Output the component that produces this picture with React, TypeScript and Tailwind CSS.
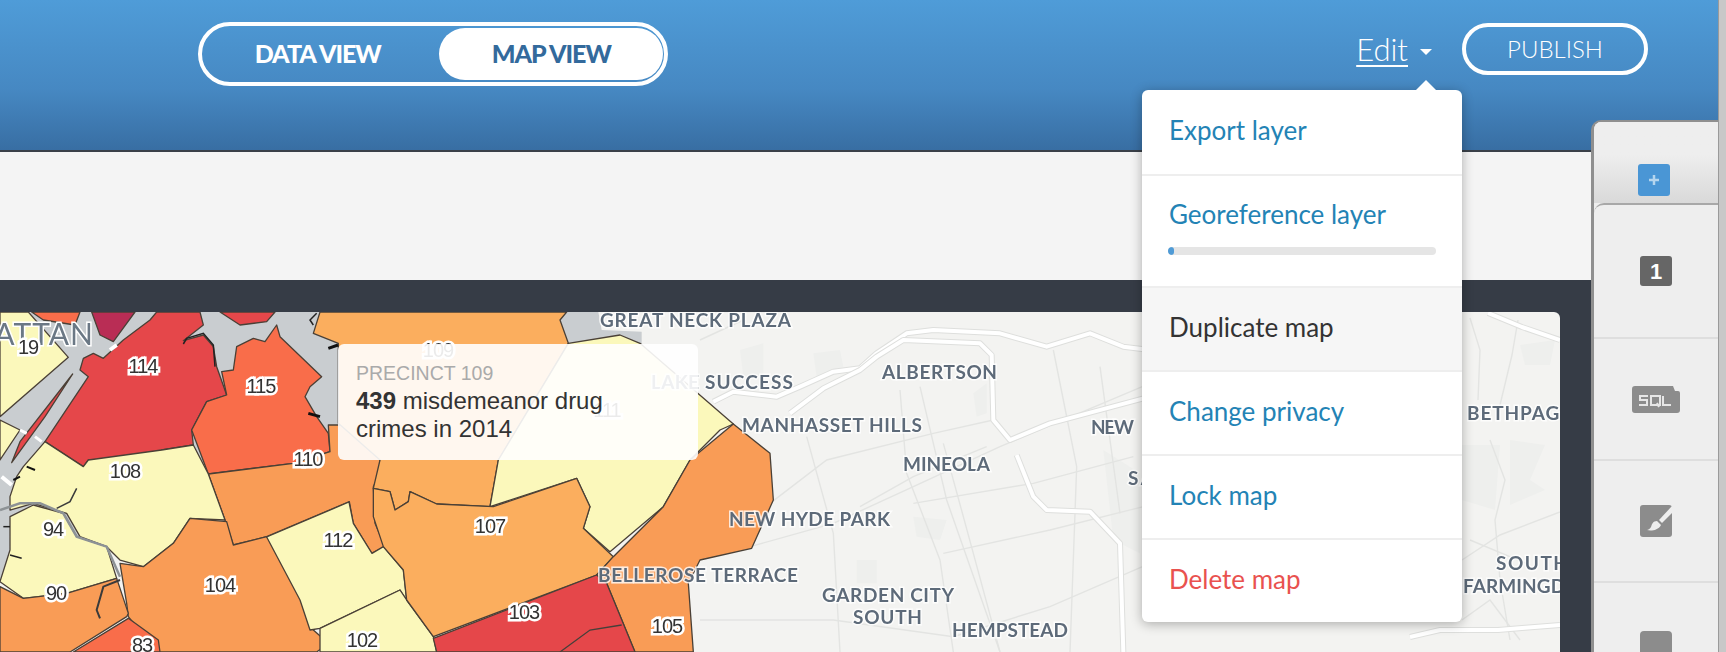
import React from "react"

// trace helpers: the numbers come from crops of the map, 3x around these origins
const trace = (ox: number, oy: number) => (p: number[]) => {
  const out: string[] = []
  for (let i = 0; i < p.length; i += 2) out.push(`${ox + p[i] / 3},${oy + p[i + 1] / 3}`)
  return out.join(" ")
}
const west = trace(0, 270)
const mid = trace(320, 300)
const east = trace(700, 300)

const YELLOW = "#fbf8bb"
const ORANGE = "#f99c56"
const LIGHT_ORANGE = "#fbae5e"
const RED = "#e5474a"
const CORAL = "#f96d4a"
const PLUM = "#b92d55"

const areas: { fill: string; pts: string }[] = [
  { fill: "#c9cdd0", pts: west([0, 126, 1030, 126, 1030, 470, 700, 720, 0, 940]) },
  { fill: "#c9cdd0", pts: mid([700, 36, 835, 36, 845, 90, 965, 95, 965, 140, 700, 140]) },
  { fill: YELLOW, pts: west([0, 126, 85, 126, 205, 262, 0, 440]) },
  { fill: YELLOW, pts: west([0, 450, 60, 480, 0, 570]) },
  { fill: CORAL, pts: west([95, 126, 240, 126, 225, 165, 130, 150]) },
  { fill: PLUM, pts: west([275, 126, 405, 126, 340, 215, 300, 195]) },
  { fill: RED, pts: west([660, 126, 825, 126, 800, 155, 720, 165]) },
  { fill: RED, pts: west([218, 312, 135, 440, 35, 578, 60, 515]) },
  {
    fill: RED,
    pts: west([470, 126, 600, 126, 610, 165, 550, 212, 610, 195, 640, 230, 650, 290, 680, 375, 620, 395, 575, 480, 580, 525, 485, 540, 475, 560, 330, 570, 265, 570, 250, 590, 135, 515, 265, 320, 240, 300, 250, 265, 280, 250, 310, 265, 370, 210, 450, 150]),
  },
  {
    fill: CORAL,
    pts: west([665, 305, 700, 300, 710, 230, 760, 205, 795, 215, 830, 165, 840, 200, 965, 320, 930, 350, 915, 380, 950, 440, 985, 490, 990, 545, 880, 580, 625, 612, 575, 480, 620, 395, 680, 375]),
  },
  {
    fill: ORANGE,
    pts: west([625, 612, 880, 580, 990, 545, 985, 465, 1140, 465, 1140, 610, 1120, 650, 1125, 760, 1155, 830, 1115, 850, 1060, 760, 1048, 695, 800, 800, 700, 825, 675, 750]),
  },
  {
    fill: YELLOW,
    pts: west([135, 515, 250, 590, 265, 570, 485, 540, 580, 525, 625, 612, 675, 750, 570, 745, 520, 820, 430, 890, 360, 870, 320, 830, 240, 800, 200, 730, 100, 700, 30, 720, 30, 680, 50, 620, 70, 590]),
  },
  {
    fill: YELLOW,
    pts: west([30, 740, 100, 705, 190, 730, 230, 800, 320, 830, 350, 925, 200, 970, 70, 985, 0, 935, 30, 840]),
  },
  {
    fill: ORANGE,
    pts: west([360, 880, 430, 890, 520, 820, 570, 745, 680, 755, 700, 825, 800, 800, 830, 830, 920, 990, 940, 1080, 985, 1120, 950, 1146, 470, 1146, 385, 1040, 380, 1000]),
  },
  { fill: ORANGE, pts: west([0, 950, 70, 985, 200, 970, 350, 925, 385, 1030, 380, 1040, 210, 1146, 0, 1146]) },
  { fill: CORAL, pts: west([385, 1045, 475, 1110, 480, 1146, 220, 1146]) },
  {
    fill: YELLOW,
    pts: mid([-160, 711, 87, 606, 100, 670, 156, 760, 190, 740, 250, 810, 260, 900, 240, 870, 0, 985, -30, 990, -60, 900]),
  },
  { fill: YELLOW, pts: mid([0, 985, 240, 870, 260, 900, 340, 1010, 350, 1056, 0, 1056]) },
  {
    fill: LIGHT_ORANGE,
    pts: mid([-20, 100, 0, 36, 740, 36, 720, 60, 745, 130, 535, 480, 510, 620, 350, 612, 270, 575, 265, 605, 225, 630, 210, 575, 160, 565, 180, 480, 55, 370, 55, 130]),
  },
  {
    fill: YELLOW,
    pts: mid([535, 480, 745, 130, 900, 105, 960, 130, 1240, 372, 1200, 390, 1110, 480, 1030, 620, 870, 755, 790, 685, 810, 620, 770, 535, 510, 620]),
  },
  {
    fill: LIGHT_ORANGE,
    pts: mid([160, 565, 210, 575, 225, 630, 265, 605, 270, 575, 350, 612, 520, 620, 770, 535, 810, 620, 790, 685, 880, 770, 830, 825, 340, 1010, 260, 900, 250, 810, 190, 740, 160, 650]),
  },
  {
    fill: ORANGE,
    pts: mid([880, 770, 1030, 620, 1110, 480, 1240, 372, 1350, 460, 1360, 600, 1295, 745, 1140, 780, 1105, 850, 1120, 1056, 945, 1056, 860, 850, 830, 825]),
  },
  { fill: RED, pts: mid([340, 1015, 830, 825, 860, 850, 945, 1056, 350, 1056]) },
]

// fat white motorways with a faint edge
const motorways = [
  east([40, 305, 100, 275, 230, 290, 300, 260, 400, 215, 480, 205, 530, 160, 620, 100, 700, 90, 900, 100, 1040, 140, 1170, 100, 1270, 140, 1350, 150]),
  east([270, 340, 370, 265, 480, 210, 530, 170, 610, 120, 840, 130, 875, 165, 880, 360, 930, 420, 1050, 370, 1350, 290]),
  east([950, 465, 1000, 590, 1040, 630, 1170, 635, 1260, 730, 1270, 1056]),
  "1488,313 1522,327 1560,340",
  "1410,637 1440,630 1498,630 1560,625",
]

const streets = [
  east([150, 740, 400, 670, 640, 560, 900, 440, 1350, 250]),
  east([210, 610, 380, 480, 700, 400, 880, 360]),
  east([480, 620, 640, 530, 860, 440]),
  east([640, 610, 1000, 550, 1300, 470]),
  east([730, 760, 1050, 690, 1330, 620]),
  east([0, 960, 400, 960, 760, 1010, 1050, 920, 1350, 790]),
  east([660, 260, 740, 600, 900, 1056]),
  east([730, 430, 820, 760, 900, 1056]),
  east([320, 410, 400, 700, 420, 1056]),
  east([600, 270, 620, 520, 720, 780, 760, 1056]),
  east([1060, 150, 1130, 500, 1110, 1056]),
  east([1200, 200, 1260, 640]),
  east([0, 120, 130, 60]),
  "1462,560 1500,535 1560,512",
  "1470,540 1530,565",
  "1500,405 1512,355 1518,320",
  "1490,440 1505,480 1495,520 1500,580 1510,640",
  "1470,318 1480,350 1478,400",
  "1462,620 1490,600 1520,640",
]

const blocks = [
  east([120, 150, 190, 130, 190, 230, 130, 230]),
  east([340, 160, 420, 150, 430, 200, 350, 230]),
  east([820, 280, 860, 250, 860, 340, 830, 350]),
  east([640, 650, 740, 660, 720, 720, 650, 710]),
  east([470, 780, 530, 780, 530, 850, 470, 850]),
  east([1210, 450, 1320, 520, 1320, 760, 1240, 720]),
  "1520,345 1555,340 1550,365 1525,365",
  "1462,445 1500,445 1495,510 1462,500",
  "1510,440 1545,445 1530,480 1545,490 1510,505",
]

const numbers: [string, number, number][] = [
  ["19", 28, 347],
  ["114", 143, 366],
  ["115", 261, 386],
  ["110", 308, 459],
  ["108", 125, 471],
  ["94", 53, 529],
  ["112", 338, 540],
  ["104", 220, 585],
  ["90", 56, 593],
  ["83", 142, 645],
  ["102", 362, 640],
  ["109", 438, 350],
  ["107", 490, 526],
  ["103", 524, 612],
  ["105", 667, 626],
  ["111", 607, 410],
]

const places: [string, number, number, number][] = [
  ["GREAT NECK PLAZA", 600, 320, 191],
  ["LAKE", 651, 382, 48],
  ["SUCCESS", 705, 382, 88],
  ["ALBERTSON", 882, 372, 115],
  ["MANHASSET HILLS", 742, 425, 180],
  ["MINEOLA", 903, 464, 87],
  ["NEW HYDE PARK", 729, 519, 161],
  ["BELLEROSE TERRACE", 598, 575, 200],
  ["GARDEN CITY", 822, 595, 132],
  ["SOUTH", 853, 617, 69],
  ["HEMPSTEAD", 952, 630, 116],
  ["NEW", 1091, 427, 43],
  ["SA", 1128, 478, 26],
  ["BETHPAGE", 1467, 413, 104],
  ["SOUTH", 1496, 563, 72],
  ["FARMINGDALE", 1463, 586, 136],
]

const squiggles: { pts: string; color: string; width: number }[] = [
  { pts: west([230, 655, 210, 695, 170, 715]), color: "#3a3a3a", width: 1.5 },
  { pts: west([360, 930, 310, 950, 290, 1020, 300, 1045]), color: "#3a3a3a", width: 2 },
  { pts: west([550, 222, 560, 205, 610, 190, 640, 225, 645, 290]), color: "#222222", width: 1.5 },
  { pts: west([985, 235, 1014, 225]), color: "#111111", width: 3 },
  { pts: west([925, 430, 960, 440]), color: "#111111", width: 3 },
  { pts: west([940, 165, 930, 150, 950, 130]), color: "#222222", width: 1.5 },
  { pts: west([80, 590, 105, 600]), color: "#111111", width: 2 },
  { pts: west([40, 630, 60, 620]), color: "#111111", width: 2 },
  { pts: west([10, 770, 30, 770]), color: "#222222", width: 1.5 },
  { pts: west([30, 855, 65, 865]), color: "#222222", width: 1.5 },
  { pts: mid([720, 1056, 810, 990, 905, 975]), color: "#45403a", width: 1.3 },
]

const MapLayer = () => (
  <svg viewBox="0 312 1560 340" className="block h-full w-full blur-[0.5px]">
    <rect x="0" y="312" width="1560" height="340" fill="#f3f3f1" />
    {blocks.map((pts, i) => (
      <polygon key={i} points={pts} fill="#eeefed" />
    ))}
    {streets.map((pts, i) => (
      <polyline key={i} points={pts} fill="none" stroke="#e3e4e2" strokeWidth="1.4" />
    ))}
    {motorways.map((pts, i) => (
      <g key={i} fill="none" strokeLinejoin="round">
        <polyline points={pts} stroke="#dedfdd" strokeWidth="6" />
        <polyline points={pts} stroke="#ffffff" strokeWidth="4" />
      </g>
    ))}
    {areas.map((a, i) => (
      <polygon key={i} points={a.pts} fill={a.fill} stroke={a.fill === "#c9cdd0" ? "none" : "#4a4036"} strokeWidth="1.3" strokeLinejoin="round" />
    ))}
    <polyline points={west([0, 720, 60, 700, 120, 700, 190, 730, 230, 800, 320, 830, 360, 920])} fill="none" stroke="#8d9295" strokeWidth="2.5" />
    {squiggles.map((s, i) => (
      <polyline key={i} points={s.pts} fill="none" stroke={s.color} strokeWidth={s.width} />
    ))}
    <polyline points={west([330, 240, 350, 225])} fill="none" stroke="#fff" strokeWidth="4" />
    <polyline points={west([60, 480, 80, 490])} fill="none" stroke="#fff" strokeWidth="3" />
    <polyline points={west([105, 500, 125, 515])} fill="none" stroke="#fff" strokeWidth="3" />
    <polyline points={west([5, 620, 35, 645])} fill="none" stroke="#fff" strokeWidth="4" />

    <text
      x="94"
      y="345"
      textAnchor="end"
      className="fill-[#6b7885] stroke-white stroke-[3px] tracking-[1px] [paint-order:stroke] text-[30px] [font-family:Lato,sans-serif]"
    >
      MANHATTAN
    </text>
    {places.map(([label, x, y, w], i) => (
      <text
        key={i}
        x={x}
        y={y + 7}
        textLength={w}
        className="fill-[#5d6a79] stroke-white/80 stroke-[3px] font-bold [paint-order:stroke] text-[19px] [font-family:Lato,sans-serif]"
      >
        {label}
      </text>
    ))}
    {numbers.map(([label, x, y]) => (
      <text
        key={label}
        x={x}
        y={y + 7}
        textAnchor="middle"
        className="fill-[#333] stroke-white stroke-[5px] [paint-order:stroke] tracking-[-1px] text-[20px] [font-family:'Liberation_Sans',sans-serif]"
      >
        {label}
      </text>
    ))}
  </svg>
)

const MenuItem = ({ label, color, active, height }: { label: string; color: string; active?: boolean; height: string }) => (
  <div className={`flex items-center border-b-2 border-[#eeeeee] px-[27px] pb-[4px] last:border-b-0 ${height} ${active ? "bg-[#f6f6f6]" : ""}`}>
    <span className={`text-[26px] ${color}`}>{label}</span>
  </div>
)

const EditMenu = () => (
  <div className="absolute left-[1142px] top-[90px] w-[320px] rounded-md bg-white shadow-[0_2px_12px_rgba(0,0,0,0.3)] [font-family:Lato,sans-serif]">
    <div className="absolute -top-[10px] left-[274px] h-0 w-0 border-x-[10px] border-b-[10px] border-x-transparent border-b-white" />
    <MenuItem label="Export layer" color="text-[#2383b5]" height="h-[86px]" />
    <div className="h-[112px] border-b-2 border-[#eeeeee] px-[26px] pt-[22px]">
      <div className="pl-[1px] text-[26px] leading-[32px] text-[#2383b5]">Georeference layer</div>
      <div className="mt-[17px] h-[8px] w-[268px] overflow-hidden rounded-full bg-[#e5e5e5]">
        <div className="h-full w-[6px] rounded-full bg-[#4f9bd6]" />
      </div>
    </div>
    <MenuItem label="Duplicate map" color="text-[#333333]" active height="h-[84px]" />
    <MenuItem label="Change privacy" color="text-[#2383b5]" height="h-[84px]" />
    <MenuItem label="Lock map" color="text-[#2383b5]" height="h-[84px]" />
    <MenuItem label="Delete map" color="text-[#e9524f]" height="h-[82px]" />
  </div>
)

const SidePanel = () => (
  <div className="absolute left-[1591px] top-[120px] h-[532px] w-[127px] overflow-hidden rounded-tl-[10px] border-l-[3px] border-t-[2px] border-[#8f8f8f] bg-[#eeeeee]">
    <div className="flex h-[81px] justify-center bg-gradient-to-b from-[#eeeeee] from-40% to-[#d9d9d9] pr-[4px] pt-[42px]">
      <div className="flex h-[32px] w-[32px] items-center justify-center rounded-[3px] bg-[#4a96d5]">
        <svg viewBox="0 0 12 12" className="h-[12px] w-[12px]">
          <path d="M6 1v10M1 6h10" stroke="#b5d5ee" strokeWidth="2.5" />
        </svg>
      </div>
    </div>
    <div className="rounded-tl-[10px] border-t-2 border-[#a8a8a8]">
      <div className="flex h-[134px] items-center justify-center border-b-2 border-[#dedede]">
        <div className="flex h-[30px] w-[32px] items-center justify-center rounded-[3px] bg-[#666666] text-[22px] font-bold text-white [font-family:'Liberation_Sans',sans-serif]">
          1
        </div>
      </div>
      <div className="flex h-[122px] items-center justify-center border-b-2 border-[#dedede]">
        <svg viewBox="0 0 48 27" className="h-[27px] w-[48px]">
          <path d="M3 0h38l2 5h3a2 2 0 0 1 2 2v17a3 3 0 0 1-3 3H3a3 3 0 0 1-3-3V3a3 3 0 0 1 3-3z" fill="#8c8c8c" />
          <path d="M16 10H8v4h7v5H7M19 10h9v9h-9zM25 17l2 4M31 10v9h8" fill="none" stroke="#e6e6e6" strokeWidth="2" />
        </svg>
      </div>
      <div className="flex h-[122px] items-center justify-center border-b-2 border-[#dedede]">
        <svg viewBox="0 0 32 32" className="h-[32px] w-[32px]">
          <rect width="32" height="32" rx="3" fill="#8c8c8c" />
          <path d="M32 1L19 15l3 3L32 8z" fill="#eeeeee" />
          <path d="M17 16c-4 0-5 3-6 6-1 2-3 3-4 3 3 1 11 1 14-5z" fill="#eeeeee" />
        </svg>
      </div>
      <div className="flex justify-center pt-[48px]">
        <div className="h-[32px] w-[32px] rounded-[4px] bg-[#8c8c8c]" />
      </div>
    </div>
  </div>
)

export default function App() {
  return (
    <div className="relative h-[652px] w-full overflow-hidden bg-[#363c46] [font-family:Lato,sans-serif]">
      <header className="flex h-[152px] border-b-2 border-[#3a4048] bg-gradient-to-b from-[#4f9cd8] via-[#4688c2] via-60% to-[#386ea3] pl-[198px] pr-[78px] pt-[22px]">
        <div className="flex h-[64px] w-[470px] items-center rounded-full border-4 border-white pr-[1px]">
          <div className="w-[238px] pr-[6px] text-center text-[25px] font-black tracking-[-1px] text-white">DATA VIEW</div>
          <div className="flex h-[52px] w-[224px] items-center justify-center rounded-full bg-white text-[25px] font-black tracking-[-1px] text-[#336a9c]">
            MAP VIEW
          </div>
        </div>
        <div className="ml-auto flex h-[52px] items-center pt-[2px] text-white">
          <span className="text-[31px] font-light underline underline-offset-[4px] decoration-[1.5px]">Edit</span>
          <span className="ml-[12px] mr-[30px] mt-[6px] h-0 w-0 border-x-[6px] border-t-[6px] border-x-transparent border-t-white" />
          <button className="flex h-[52px] w-[186px] items-center justify-center rounded-full border-4 border-white text-[24px] font-light">
            PUBLISH
          </button>
        </div>
      </header>
      <div className="h-[128px] bg-[#f4f4f4]" />
      <div className="pt-[32px] pr-[166px]">
        <div className="relative h-[340px] overflow-hidden rounded-tr-md">
          <MapLayer />
          <div className="absolute left-[338px] top-[32px] h-[116px] w-[360px] rounded-md bg-white/90 px-[18px] pt-[15px] text-[24px] leading-[28px] text-[#333333] [font-family:'Liberation_Sans',sans-serif]">
            <div className="text-[19.5px] text-[#aaaaaa]">PRECINCT 109</div>
            <div className="pr-[50px]">
              <b>439</b> misdemeanor drug crimes in 2014
            </div>
          </div>
        </div>
      </div>
      <EditMenu />
      <SidePanel />
      <div className="absolute right-0 top-0 h-full w-[8px] border-l border-[#9a9a9a] bg-[#c8c8c8]" />
    </div>
  )
}
